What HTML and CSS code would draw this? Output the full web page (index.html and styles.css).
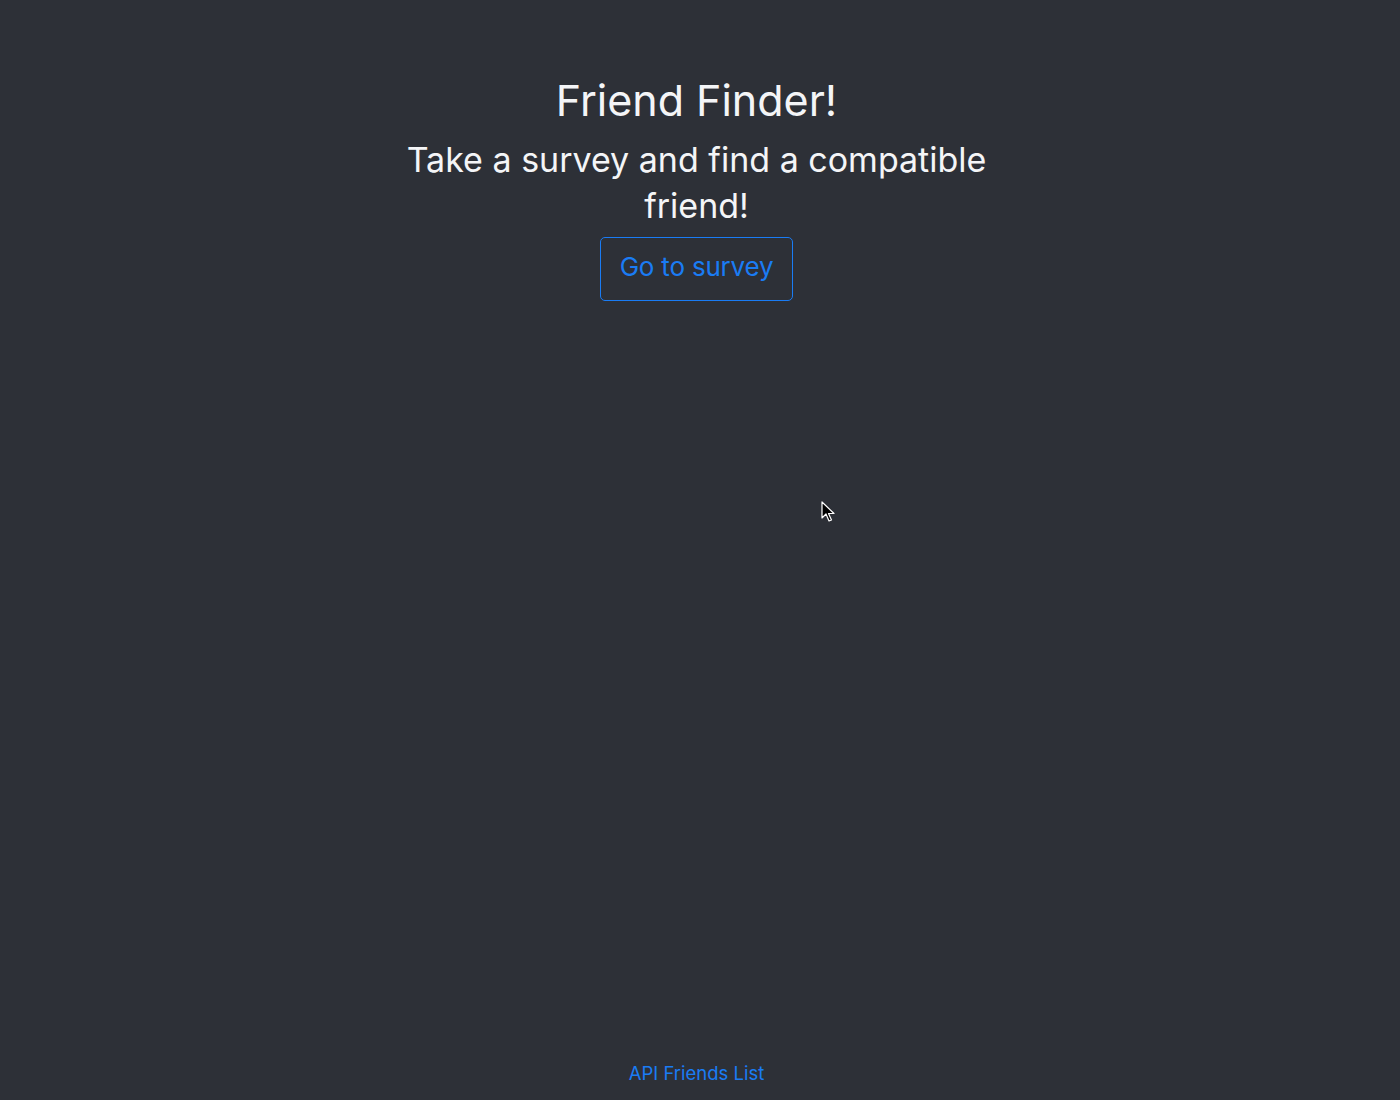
FILE: index.html
```html
<!DOCTYPE html>
<html lang="en">
<head>
<meta charset="utf-8">
<title>Friend Finder</title>
<link rel="stylesheet" href="styles.css">
</head>
<body>
<main class="page">
  <section class="hero">
    <h1 class="title">Friend Finder!</h1>
    <h2 class="subtitle">Take a survey and find a compatible friend!</h2>
    <a class="btn-survey" href="#">Go to survey</a>
  </section>
  <footer class="footer">
    <a class="footer-link" href="#">API Friends List</a>
  </footer>
</main>
<svg class="cursor" width="14" height="22" viewBox="0 0 14 22" aria-hidden="true">
  <path d="M1 1 L1 17 L5 13 L8 20 L10.5 19 L7.5 12.5 L13 12.5 Z" fill="#000" stroke="#fff" stroke-width="1.2" stroke-linejoin="round"/>
</svg>
</body>
</html>
```

FILE: styles.css
```css
html, body {
  margin: 0;
  padding: 0;
  height: 100%;
}
body {
  background: #2d3037;
  color: #f4f5f7;
  font-family: Inter, "Noto Sans", sans-serif;
}
.page {
  min-height: 1100px;
  padding-right: 7px;
  display: flex;
  flex-direction: column;
  align-items: center;
}
.hero {
  width: 600px;
  display: flex;
  flex-direction: column;
  align-items: center;
  text-align: center;
  padding-top: 74px;
  flex: 1;
}
.title {
  margin: 0;
  font-size: 43px;
  font-weight: 400;
  line-height: 52px;
}
.subtitle {
  margin: 11px 0 8px;
  font-size: 34px;
  font-weight: 400;
  line-height: 46px;
}
.btn-survey {
  display: inline-block;
  box-sizing: border-box;
  height: 64px;
  padding: 0 19px;
  border: 1px solid #1a7cf4;
  border-radius: 5px;
  color: #1a7cf4;
  font-size: 26px;
  line-height: 58px;
  text-decoration: none;
  letter-spacing: -0.2px;
}
.footer {
  padding-bottom: 15px;
}
.footer-link {
  color: #1a7cf4;
  font-size: 18.5px;
  line-height: 24px;
  text-decoration: none;
}
.cursor {
  position: absolute;
  left: 821px;
  top: 501px;
}
```
